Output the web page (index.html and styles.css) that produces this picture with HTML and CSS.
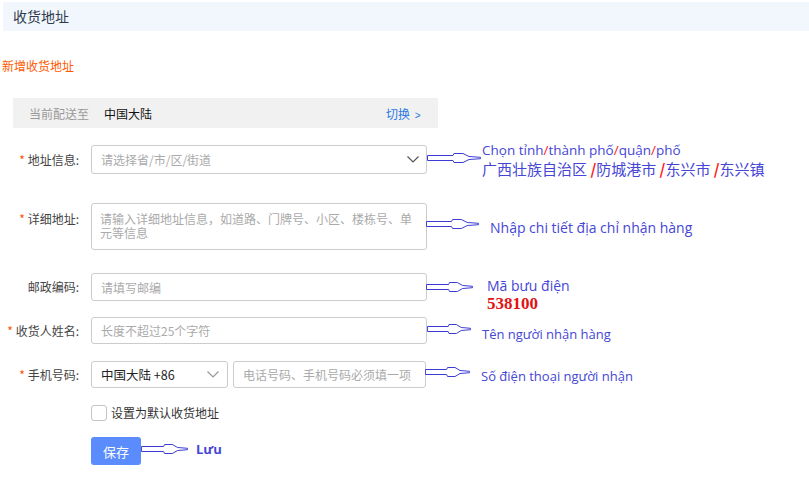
FILE: index.html
```html
<!DOCTYPE html>
<html>
<head>
<meta charset="utf-8">
<link rel="stylesheet" href="styles.css">
</head>
<body>
<div class="page">
  <div class="topbar">收货地址</div>
  <div class="title">新增收货地址</div>
  <div class="ship">
    <span class="ship-label">当前配送至</span>
    <span class="ship-val">中国大陆</span>
    <span class="ship-switch">切换 <span class="gt">&gt;</span></span>
  </div>

  <div class="form">
    <div class="row r1">
      <div class="lbl"><i>*</i> 地址信息:</div>
      <div class="field">
        <span class="ph">请选择省/市/区/街道</span>
        <svg class="chev" width="12" height="7" viewBox="0 0 12 7"><polyline points="0.5,0.5 6,6 11.5,0.5" fill="none" stroke="#555" stroke-width="1.2"/></svg>
      </div>
      <div class="note n1">
        <svg class="arrow" viewBox="0 0 54 12" preserveAspectRatio="none"><polygon points="0.5,3.5 26,3.5 27,1.5 36,1.5 42,4.5 53.5,5.3 53.5,6.7 42,7.5 36,10.5 27,10.5 26,8.5 0.5,8.5" fill="#fff" stroke="#3c3cd2" stroke-width="1" vector-effect="non-scaling-stroke"/></svg>
        <div class="txt">
          <div class="vi l1">Chọn tỉnh<b>/</b>thành phố<b>/</b>quận<b>/</b>phố</div>
          <div class="cn">广西壮族自治区 <b>/</b>防城港市 <b>/</b>东兴市 <b>/</b>东兴镇</div>
        </div>
      </div>
    </div>

    <div class="row r2">
      <div class="lbl"><i>*</i> 详细地址:</div>
      <div class="field area"><span class="ph">请输入详细地址信息，如道路、门牌号、小区、楼栋号、单元等信息</span></div>
      <div class="note n2">
        <svg class="arrow" viewBox="0 0 54 12" preserveAspectRatio="none"><polygon points="0.5,3.5 26,3.5 27,1.5 36,1.5 42,4.5 53.5,5.3 53.5,6.7 42,7.5 36,10.5 27,10.5 26,8.5 0.5,8.5" fill="#fff" stroke="#3c3cd2" stroke-width="1" vector-effect="non-scaling-stroke"/></svg>
        <div class="txt vi">Nhập chi tiết địa chỉ nhận hàng</div>
      </div>
    </div>

    <div class="row r3">
      <div class="lbl">邮政编码:</div>
      <div class="field"><span class="ph">请填写邮编</span></div>
      <div class="note n3">
        <svg class="arrow" viewBox="0 0 54 12" preserveAspectRatio="none"><polygon points="0.5,3.5 26,3.5 27,1.5 36,1.5 42,4.5 53.5,5.3 53.5,6.7 42,7.5 36,10.5 27,10.5 26,8.5 0.5,8.5" fill="#fff" stroke="#3c3cd2" stroke-width="1" vector-effect="non-scaling-stroke"/></svg>
        <div class="txt">
          <div class="vi">Mã bưu điện</div>
          <div class="zip">538100</div>
        </div>
      </div>
    </div>

    <div class="row r4">
      <div class="lbl"><i>*</i> 收货人姓名:</div>
      <div class="field"><span class="ph">长度不超过25个字符</span></div>
      <div class="note n4">
        <svg class="arrow" viewBox="0 0 54 12" preserveAspectRatio="none"><polygon points="0.5,3.5 26,3.5 27,1.5 36,1.5 42,4.5 53.5,5.3 53.5,6.7 42,7.5 36,10.5 27,10.5 26,8.5 0.5,8.5" fill="#fff" stroke="#3c3cd2" stroke-width="1" vector-effect="non-scaling-stroke"/></svg>
        <div class="txt vi sm">Tên người nhận hàng</div>
      </div>
    </div>

    <div class="row r5">
      <div class="lbl"><i>*</i> 手机号码:</div>
      <div class="phone">
        <div class="field code">
          <span class="val">中国大陆 +86</span>
          <svg class="chev" width="12" height="7" viewBox="0 0 12 7"><polyline points="0.5,0.5 6,6 11.5,0.5" fill="none" stroke="#999" stroke-width="1.2"/></svg>
        </div>
        <div class="field num"><span class="ph">电话号码、手机号码必须填一项</span></div>
      </div>
      <div class="note n5">
        <svg class="arrow" viewBox="0 0 54 12" preserveAspectRatio="none"><polygon points="0.5,3.5 26,3.5 27,1.5 36,1.5 42,4.5 53.5,5.3 53.5,6.7 42,7.5 36,10.5 27,10.5 26,8.5 0.5,8.5" fill="#fff" stroke="#3c3cd2" stroke-width="1" vector-effect="non-scaling-stroke"/></svg>
        <div class="txt vi sm">Số điện thoại người nhận</div>
      </div>
    </div>

    <div class="row r6">
      <div class="lbl"></div>
      <span class="check"></span>
      <span class="check-label">设置为默认收货地址</span>
    </div>

    <div class="row r7">
      <div class="lbl"></div>
      <button class="save">保存</button>
      <div class="note n7">
        <svg class="arrow" viewBox="0 0 54 12" preserveAspectRatio="none"><polygon points="0.5,3.5 26,3.5 27,1.5 36,1.5 42,4.5 53.5,5.3 53.5,6.7 42,7.5 36,10.5 27,10.5 26,8.5 0.5,8.5" fill="#fff" stroke="#3c3cd2" stroke-width="1" vector-effect="non-scaling-stroke"/></svg>
        <div class="txt vi lu">Lưu</div>
      </div>
    </div>
  </div>
</div>
</body>
</html>
```

FILE: styles.css
```css
html, body {
  margin: 0;
  padding: 0;
  background: #fff;
}
body {
  font-family: "Noto Sans CJK SC", "Noto Sans", sans-serif;
  font-size: 12px;
  color: #333;
}
.page {
  width: 809px;
  height: 480px;
  overflow: hidden;
}
.topbar {
  margin: 2px 0 0 3px;
  height: 29px;
  line-height: 29px;
  background: #f2f7fe;
  padding-left: 10px;
  font-size: 14px;
  color: #2f3b4a;
}
.title {
  margin: 26px 0 0 2px;
  height: 18px;
  line-height: 18px;
  font-size: 12px;
  color: #ff5a00;
}
.ship {
  margin: 23px 0 0 13px;
  width: 425px;
  height: 30px;
  background: #f1f1f1;
  display: flex;
  align-items: center;
  padding-left: 16px;
  box-sizing: border-box;
}
.ship-label {
  color: #999;
  width: 75px;
}
.ship-val {
  color: #111;
  flex: 1;
}
.ship-switch {
  color: #2a78e4;
  width: 52px;
}
.ship-switch .gt {
  font-size: 10px;
  font-family: "Liberation Sans", sans-serif;
  margin-left: 2px;
}
.form {
  display: flex;
  flex-direction: column;
}
.row {
  display: flex;
  align-items: flex-start;
}
.lbl {
  width: 79px;
  padding-right: 12px;
  text-align: right;
  color: #444;
  white-space: nowrap;
  flex: none;
}
.lbl i {
  font-style: normal;
  color: #ff5000;
}
.field {
  box-sizing: border-box;
  width: 336px;
  border: 1px solid #ccc;
  border-radius: 3px;
  padding: 0 9px;
  display: flex;
  align-items: center;
  justify-content: space-between;
  flex: none;
  background: #fff;
}
.ph {
  color: #aaa;
}
.r1 { margin-top: 17px; height: 29px; }
.r1 .lbl { line-height: 29px; }
.r1 .field { height: 29px; }
.r1 .chev { margin-right: -2px; }

.r2 { margin-top: 29px; height: 47px; }
.r2 .lbl { line-height: 32px; }
.field.area {
  height: 47px;
  align-items: flex-start;
  padding: 8px 8px 0 8px;
  line-height: 14px;
}

.r3 { margin-top: 23px; height: 28px; }
.r3 .lbl { line-height: 28px; }
.r3 .field { height: 28px; }

.r4 { margin-top: 16px; height: 27px; }
.r4 .lbl { line-height: 27px; }
.r4 .field { height: 27px; }

.r5 { margin-top: 17px; height: 27px; }
.r5 .lbl { line-height: 27px; }
.phone {
  display: flex;
  gap: 5px;
  width: 335px;
  flex: none;
}
.phone .field { height: 27px; }
.field.code { width: 137px; padding-right: 8px; }
.field.code .val { color: #222; font-size: 12.5px; }
.field.num { width: 193px; }

.r6 { margin-top: 17px; height: 16px; align-items: center; }
.check {
  box-sizing: border-box;
  width: 16px;
  height: 16px;
  border: 1px solid #c4c4c4;
  border-radius: 3px;
  flex: none;
}
.check-label {
  margin-left: 4px;
  color: #333;
  line-height: 16px;
}

.r7 { margin-top: 16px; height: 28px; }
.save {
  width: 50px;
  height: 28px;
  border: none;
  border-radius: 3px;
  background: #5a8cfd;
  color: #fff;
  font-family: "Noto Sans CJK SC", sans-serif;
  font-size: 13px;
  padding: 0;
  flex: none;
}

/* annotations */
.note {
  display: flex;
  align-items: flex-start;
  white-space: nowrap;
}
.arrow {
  display: block;
  height: 12px;
  width: 54px;
  flex: none;
}
.vi {
  font-family: "Open Sans", "Noto Sans", sans-serif;
  font-size: 14px;
  line-height: 18px;
  color: #4646d6;
}
.vi.sm { font-size: 13px; }
.vi b, .cn b {
  color: #ff2020;
  font-weight: normal;
}
.cn b { font-weight: bold; }
.cn {
  font-family: "Noto Sans CJK SC", sans-serif;
  font-size: 15px;
  line-height: 20px;
  color: #4646d6;
}
.l1 { font-size: 13.5px; line-height: 17px; }
.zip {
  font-family: "Liberation Serif", serif;
  font-weight: bold;
  font-size: 17px;
  line-height: 18px;
  color: #e01414;
}
.n1 .arrow { margin-top: 7px; width: 54px; }
.n1 .txt { margin-left: 1px; margin-top: -3px; }
.n2 .arrow { margin-top: 15px; width: 53px; margin-left: -1px; }
.n2 .txt { margin-left: 11px; margin-top: 16px; }
.n3 .arrow { margin-top: 8px; width: 47px; margin-left: -1px; }
.n3 .txt { margin-left: 14px; margin-top: 4px; }
.n4 .arrow { margin-top: 6px; width: 44px; }
.n4 .txt { margin-left: 11px; margin-top: 8px; }
.n5 .arrow { margin-top: 5px; width: 45px; margin-left: -1px; }
.n5 .txt { margin-left: 11px; margin-top: 6px; }
.n7 .arrow { margin-top: 6px; width: 47px; }
.n7 .txt { margin-left: 8px; margin-top: 3px; }
.lu { font-weight: bold; font-size: 13px; }
```
